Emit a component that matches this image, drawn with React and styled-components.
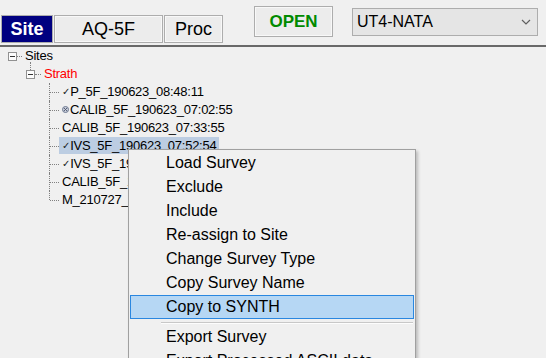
import React from "react";
import styled, { createGlobalStyle } from "styled-components";

const GlobalStyle = createGlobalStyle`
  html, body {
    margin: 0;
    padding: 0;
    background: #f0f0f0;
  }
  body {
    font-family: "Liberation Sans", Arial, sans-serif;
    color: #000;
    overflow: hidden;
  }
`;

const Window = styled.div`
  position: relative;
  width: 546px;
  height: 358px;
  overflow: hidden;
  background: #f0f0f0;
`;

// Toolbar
const Toolbar = styled.div`
  display: flex;
  height: 45px;
  padding-left: 1px;
  border-bottom: 2px solid #696969;
`;

const Tabs = styled.div`
  display: flex;
  gap: 1px;
  align-self: flex-end;
  margin-bottom: 2px;
`;

const Tab = styled.div`
  box-sizing: border-box;
  width: ${(p) => p.$w}px;
  height: 28px;
  display: flex;
  align-items: center;
  justify-content: center;
  border: 1px solid #adadad;
  background: ${(p) => (p.$active ? "#000080" : "#ececec")};
  box-shadow: ${(p) => (p.$active ? "none" : "inset 0 0 0 1px #f8f8f8")};
  color: ${(p) => (p.$active ? "#fff" : "#000")};
  font-size: 18px;
  font-weight: ${(p) => (p.$active ? 700 : 400)};
`;

const OpenButton = styled.div`
  box-sizing: border-box;
  margin: 6px 0 0 31px;
  width: 79px;
  height: 31px;
  display: flex;
  align-items: center;
  justify-content: center;
  border: 1px solid #adadad;
  background: #ececec;
  box-shadow: inset 0 0 0 1px #f8f8f8;
  color: #008a00;
  font-size: 17px;
  font-weight: 700;
`;

const Combo = styled.div`
  box-sizing: border-box;
  margin: 8px 0 0 19px;
  width: 186px;
  height: 28px;
  display: flex;
  align-items: center;
  justify-content: space-between;
  padding: 0 6px 0 4px;
  border: 1px solid #adadad;
  background: #e5e5e5;
  font-size: 16px;
`;

// Tree
const Tree = styled.div`
  display: flex;
  flex-direction: column;
`;

const Row = styled.div`
  position: relative;
  height: 18px;
  display: flex;
  align-items: center;
  padding-left: ${(p) => p.$indent}px;
  font-size: 13px;
  letter-spacing: -0.25px;
  white-space: nowrap;

  &::before {
    content: ${(p) => (p.$guide != null ? '""' : "none")};
    position: absolute;
    left: ${(p) => p.$guide}px;
    top: ${(p) => p.$from || 0}px;
    bottom: ${(p) => (p.$last ? 9 : 0)}px;
    border-left: 1px dotted #808080;
  }
`;

const Expander = styled.span`
  position: relative;
  box-sizing: border-box;
  width: 9px;
  height: 9px;
  border: 1px solid #919191;
  background: #fcfcfc;

  &::after {
    content: "";
    position: absolute;
    left: 1px;
    top: 3px;
    width: 5px;
    height: 1px;
    background: #333;
  }
`;

const Stub = styled.span`
  width: ${(p) => p.$w}px;
  border-top: 1px dotted #808080;
`;

const Label = styled.span`
  display: flex;
  align-items: center;
  align-self: flex-start;
  height: 17px;
  padding: 0 3px;
  color: ${(p) => (p.$red ? "#ff0000" : "#000")};
  background: ${(p) => (p.$selected ? "#bccde2" : "transparent")};
`;

const Check = styled.span`
  font-family: "DejaVu Sans", sans-serif;
  font-size: 10px;
  margin-right: 0;
  color: #1a1a1a;
`;

// Context menu
const Menu = styled.div`
  position: absolute;
  left: 128px;
  top: 149px;
  box-sizing: border-box;
  width: 288px;
  height: 240px;
  padding: 1px 0;
  border: 1px solid #a0a0a0;
  background: #f0f0f0;
  box-shadow: 2px 2px 3px rgba(0, 0, 0, 0.22);
`;

const MenuItem = styled.div`
  box-sizing: border-box;
  height: 24px;
  margin: 0 1px;
  display: flex;
  align-items: center;
  padding-left: 35px;
  font-size: 16px;
  border: 1px solid ${(p) => (p.$hot ? "#2a87e0" : "transparent")};
  background: ${(p) => (p.$hot ? "#b6d7f4" : "transparent")};
`;

const Separator = styled.div`
  margin: 3px 2px 1px 32px;
  border-top: 1px solid #c8c8c8;
  border-bottom: 1px solid #fdfdfd;
`;

const Chevron = () => (
  <svg width="10" height="6" viewBox="0 0 10 6">
    <path d="M1 1 L5 5 L9 1" fill="none" stroke="#606060" strokeWidth="1.2" />
  </svg>
);

const Calib = () => (
  <svg width="7" height="7" viewBox="0 0 7 7" style={{ marginRight: 1 }}>
    <circle cx="3.5" cy="3.5" r="3" fill="#c8ccd8" stroke="#6d7890" strokeWidth="1" />
    <path d="M2 2 L5 5 M5 2 L2 5" stroke="#4d5870" strokeWidth="0.9" />
  </svg>
);

const surveys = [
  { name: "P_5F_190623_08:48:11", mark: "check" },
  { name: "CALIB_5F_190623_07:02:55", mark: "calib" },
  { name: "CALIB_5F_190623_07:33:55" },
  { name: "IVS_5F_190623_07:52:54", mark: "check", selected: true },
  { name: "IVS_5F_190623_08:15:02", mark: "check" },
  { name: "CALIB_5F_190623_08:31:40" },
  { name: "M_210727_10:12:36" },
];

const menuItems = [
  "Load Survey",
  "Exclude",
  "Include",
  "Re-assign to Site",
  "Change Survey Type",
  "Copy Survey Name",
  "Copy to SYNTH",
];

export default function App() {
  return (
    <Window>
      <GlobalStyle />
      <Toolbar>
        <Tabs>
          <Tab $w={52} $active>
            Site
          </Tab>
          <Tab $w={109}>AQ-5F</Tab>
          <Tab $w={59}>Proc</Tab>
        </Tabs>
        <OpenButton>OPEN</OpenButton>
        <Combo>
          <span>UT4-NATA</span>
          <Chevron />
        </Combo>
      </Toolbar>

      <Tree>
        <Row $indent={8}>
          <Expander />
          <Stub $w={5} />
          <Label>Sites</Label>
        </Row>
        <Row $indent={26} $guide={30} $from={-3} $last>
          <Expander />
          <Stub $w={6} />
          <Label $red>Strath</Label>
        </Row>
        {surveys.map((s, i) => (
          <Row
            key={s.name}
            $indent={50}
            $guide={49}
            $last={i === surveys.length - 1}
          >
            <Stub $w={9} />
            <Label $selected={s.selected}>
              {s.mark === "check" && <Check>✓</Check>}
              {s.mark === "calib" && <Calib />}
              {s.name}
            </Label>
          </Row>
        ))}
      </Tree>

      <Menu>
        {menuItems.map((m) => (
          <MenuItem key={m} $hot={m === "Copy to SYNTH"}>
            {m}
          </MenuItem>
        ))}
        <Separator />
        <MenuItem>Export Survey</MenuItem>
        <MenuItem>Export Processed ASCII data</MenuItem>
      </Menu>
    </Window>
  );
}
